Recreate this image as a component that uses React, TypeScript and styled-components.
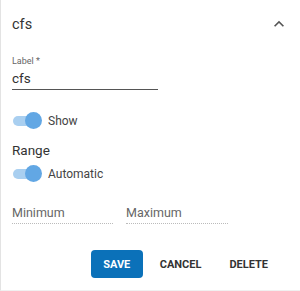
import React from "react";
import styled, { createGlobalStyle } from "styled-components";

const Global = createGlobalStyle`
  html, body { margin: 0; padding: 0; background: #fff; }
  body { font-family: Roboto, "Liberation Sans", Arial, sans-serif; }
  * { box-sizing: border-box; }
`;

const Panel = styled.div`
  width: 300px;
  height: 291px;
  border-left: 1px solid #e3e3e3;
  border-bottom: 1px solid #f0f0f0;
  padding: 15px 0 0 11px;
  display: flex;
  flex-direction: column;
  align-items: flex-start;
  color: #333;
`;

const Header = styled.div`
  width: 100%;
  height: 20px;
  display: flex;
  align-items: center;
  justify-content: space-between;
  padding-right: 11px;
`;

const Title = styled.div`
  font-size: 14.5px;
  line-height: 20px;
  color: #333;
`;

const Chevron = styled.svg`
  width: 20px;
  height: 20px;
  margin-top: -3px;
  fill: #555;
`;

const Field = styled.div`
  margin-top: 21px;
  width: 146px;
  display: flex;
  flex-direction: column;
`;

const FieldLabel = styled.div`
  font-size: 9px;
  line-height: 11px;
  color: #666;
`;

const FieldInput = styled.div`
  margin-top: 3px;
  font-size: 13.5px;
  line-height: 16px;
  padding-bottom: 2.5px;
  border-bottom: 1px solid #555;
  color: #333;
`;

const ToggleRow = styled.div<{ $mt: number }>`
  margin-top: ${(p) => p.$mt}px;
  height: 18px;
  display: flex;
  align-items: center;
  gap: 6px;
`;

const Switch = styled.div`
  position: relative;
  width: 30px;
  height: 18px;
`;

const Track = styled.div`
  position: absolute;
  left: 1px;
  top: 4px;
  width: 26px;
  height: 10px;
  border-radius: 5px;
  background: #a9cff0;
`;

const Thumb = styled.div`
  position: absolute;
  left: 13px;
  top: 0.5px;
  width: 17px;
  height: 17px;
  border-radius: 50%;
  background: #62a7e4;
`;

const ToggleText = styled.span`
  font-size: 12px;
  line-height: 16px;
  color: #444;
`;

const Section = styled.div`
  margin-top: 12px;
  font-size: 13.5px;
  line-height: 16px;
  color: #333;
`;

const RangeRow = styled.div`
  margin-top: 22px;
  display: flex;
  gap: 13px;
`;

const RangeInput = styled.div<{ $w: number }>`
  width: ${(p) => p.$w}px;
  font-size: 12.5px;
  line-height: 16px;
  color: #666;
  padding-bottom: 2.5px;
  border-bottom: 1px dotted #bbb;
`;

const Actions = styled.div`
  margin-top: 26px;
  width: 100%;
  display: flex;
  justify-content: flex-end;
  gap: 6px;
  padding-right: 21px;
`;

const Button = styled.button<{ $primary?: boolean }>`
  height: 28px;
  min-width: ${(p) => (p.$primary ? "52px" : "0")};
  padding: 0 11px;
  border: none;
  border-radius: 4px;
  font-family: Roboto, "Liberation Sans", Arial, sans-serif;
  font-size: 11px;
  font-weight: 700;
  letter-spacing: 0;
  text-transform: uppercase;
  background: ${(p) => (p.$primary ? "#0b71b9" : "transparent")};
  color: ${(p) => (p.$primary ? "#fff" : "#333")};
  cursor: pointer;
`;

function Toggle({ label, mt }: { label: string; mt: number }) {
  return (
    <ToggleRow $mt={mt}>
      <Switch>
        <Track />
        <Thumb />
      </Switch>
      <ToggleText>{label}</ToggleText>
    </ToggleRow>
  );
}

export default function App() {
  return (
    <>
      <Global />
      <Panel>
        <Header>
          <Title>cfs</Title>
          <Chevron viewBox="0 0 24 24">
            <path d="M12 8l-6 6 1.41 1.41L12 10.83l4.59 4.58L18 14z" />
          </Chevron>
        </Header>
        <Field>
          <FieldLabel>Label *</FieldLabel>
          <FieldInput>cfs</FieldInput>
        </Field>
        <Toggle label="Show" mt={22} />
        <Section>Range</Section>
        <Toggle label="Automatic" mt={7} />
        <RangeRow>
          <RangeInput $w={101}>Minimum</RangeInput>
          <RangeInput $w={102}>Maximum</RangeInput>
        </RangeRow>
        <Actions>
          <Button $primary>Save</Button>
          <Button>Cancel</Button>
          <Button>Delete</Button>
        </Actions>
      </Panel>
    </>
  );
}
